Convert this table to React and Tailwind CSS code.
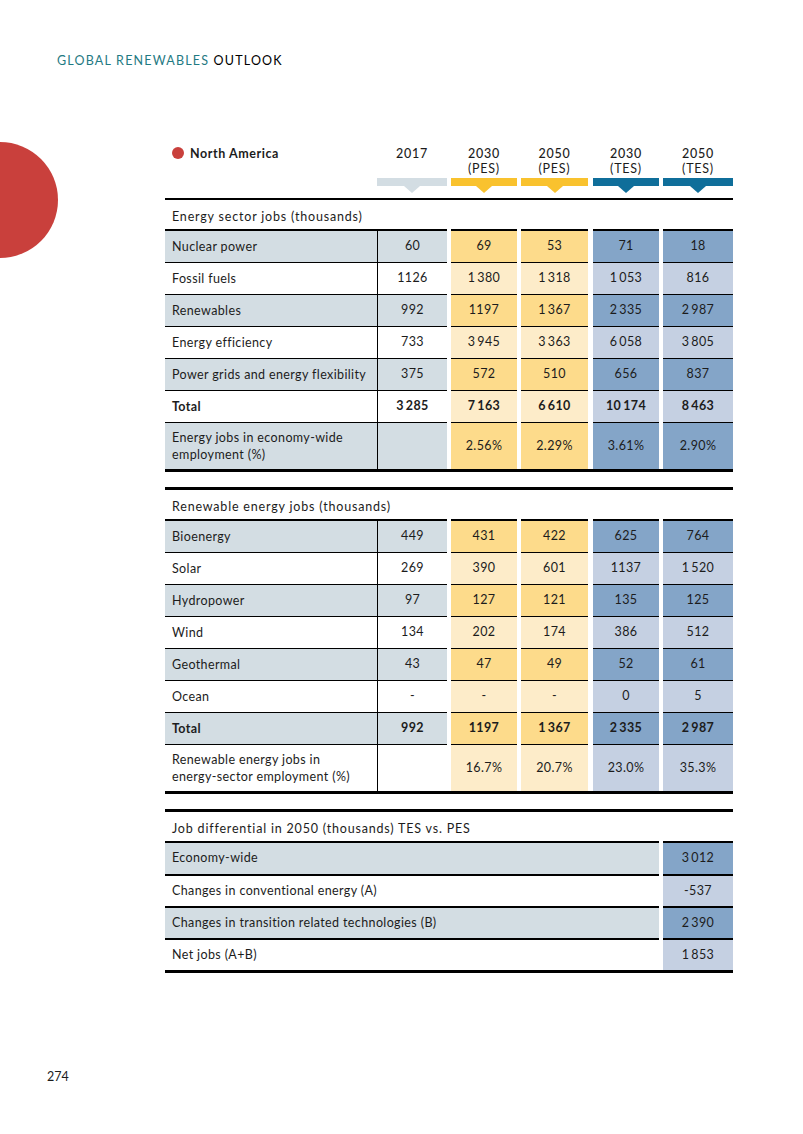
import React from 'react';

const shadeLabel = 'bg-[#d3dde3]';
const t = '\u2009';

const energyRows = [
  ['Nuclear power', '60', '69', '53', '71', '18'],
  ['Fossil fuels', '1126', `1${t}380`, `1${t}318`, `1${t}053`, '816'],
  ['Renewables', '992', '1197', `1${t}367`, `2${t}335`, `2${t}987`],
  ['Energy efficiency', '733', `3${t}945`, `3${t}363`, `6${t}058`, `3${t}805`],
  ['Power grids and energy flexibility', '375', '572', '510', '656', '837'],
];

const renewableRows = [
  ['Bioenergy', '449', '431', '422', '625', '764'],
  ['Solar', '269', '390', '601', '1137', `1${t}520`],
  ['Hydropower', '97', '127', '121', '135', '125'],
  ['Wind', '134', '202', '174', '386', '512'],
  ['Geothermal', '43', '47', '49', '52', '61'],
  ['Ocean', '-', '-', '-', '0', '5'],
];

const diffRows = [
  ['Economy-wide', `3${t}012`],
  ['Changes in conventional energy (A)', '-537'],
  ['Changes in transition related technologies (B)', `2${t}390`],
  ['Net jobs (A+B)', `1${t}853`],
];

function Row({ label, vals, shaded, bold, tall, first }) {
  const h = tall ? 'h-[47px]' : first ? 'h-[33px]' : 'h-[32px]';
  const bt = first ? 'border-t-2 border-black' : 'border-t border-black';
  const weight = bold ? 'font-bold' : '';
  const yellow = shaded ? 'bg-[#fddb8b]' : 'bg-[#fdecc9]';
  const blue = shaded ? 'bg-[#84a5c8]' : 'bg-[#c5d0e2]';
  const left = shaded ? shadeLabel : 'bg-white';
  return (
    <div className={`flex ${h} ${weight}`}>
      <div className={`w-[212px] ${bt} ${left} pl-[7px] flex items-center leading-[17px]`}>{label}</div>
      <div className={`w-[70px] ${bt} border-l ${left} flex items-center justify-center`}>{vals[0]}</div>
      <div className="w-[4px] bg-white" />
      <div className={`w-[66px] ${bt} ${yellow} flex items-center justify-center`}>{vals[1]}</div>
      <div className="w-[4px] bg-white" />
      <div className={`w-[67px] ${bt} ${yellow} flex items-center justify-center`}>{vals[2]}</div>
      <div className="w-[5px] bg-white" />
      <div className={`w-[66px] ${bt} ${blue} flex items-center justify-center`}>{vals[3]}</div>
      <div className="w-[4px] bg-white" />
      <div className={`w-[70px] ${bt} ${blue} flex items-center justify-center`}>{vals[4]}</div>
    </div>
  );
}

function DiffRow({ label, val, shaded, first }) {
  const h = first ? 'h-[33px]' : 'h-[32px]';
  return (
    <div className={`flex ${h}`}>
      <div className={`w-[494px] border-t-2 border-black ${shaded ? shadeLabel : 'bg-white'} pl-[7px] flex items-center`}>{label}</div>
      <div className="w-[4px] bg-white" />
      <div className={`w-[70px] border-t-2 border-black ${shaded ? 'bg-[#84a5c8]' : 'bg-[#c5d0e2]'} flex items-center justify-center`}>{val}</div>
    </div>
  );
}

function SectionTitle({ children }) {
  return <div className="h-[29px] flex items-center pl-[7px] pt-[5px] tracking-[0.065em]">{children}</div>;
}

function HeadCol({ top, bottom, width, bar, tri }) {
  return (
    <div className={`${width} flex flex-col items-center`}>
      <div className="h-[33px] flex flex-col items-center leading-[15px] pt-[1px] tracking-[0.06em]">
        <span className="font-medium">{top}</span>
        {bottom && <span>{bottom}</span>}
      </div>
      <div className={`w-full h-[8px] ${bar}`} />
      <div className={`w-0 h-0 border-l-[8px] border-r-[8px] border-t-[7px] border-l-transparent border-r-transparent ${tri}`} />
    </div>
  );
}

export default function App() {
  return (
    <div
      className="relative w-[803px] h-[1134px] bg-white overflow-hidden text-[#1c1c1c]"
      style={{ fontFamily: 'Lato, "Open Sans", sans-serif' }}
    >
      <div className="absolute left-[-58px] top-[142px] w-[116px] h-[116px] rounded-full bg-[#c9403c]" />

      <div className="pt-[53px] pl-[57px] text-[12.5px] leading-[16px] tracking-[0.095em]">
        <span className="text-[#1f7a83]">GLOBAL RENEWABLES</span> <span className="text-black">OUTLOOK</span>
      </div>

      <div className="mt-[76px] pl-[165px] text-[12.5px] tracking-[0.03em]">
        <div className="flex h-[53px]">
          <div className="w-[212px] flex items-start pl-[7px] pt-[1px] leading-[15px]">
            <span className="w-[12px] h-[12px] rounded-full bg-[#c9403c] mr-[6px] mt-[1px]" />
            <span className="font-bold tracking-[0.045em]">North America</span>
          </div>
          <HeadCol top="2017" width="w-[70px]" bar="bg-[#d3dde3]" tri="border-t-[#d3dde3]" />
          <div className="w-[4px]" />
          <HeadCol top="2030" bottom="(PES)" width="w-[66px]" bar="bg-[#f9c22e]" tri="border-t-[#f9c22e]" />
          <div className="w-[4px]" />
          <HeadCol top="2050" bottom="(PES)" width="w-[67px]" bar="bg-[#f9c22e]" tri="border-t-[#f9c22e]" />
          <div className="w-[5px]" />
          <HeadCol top="2030" bottom="(TES)" width="w-[66px]" bar="bg-[#0f6e9a]" tri="border-t-[#0f6e9a]" />
          <div className="w-[4px]" />
          <HeadCol top="2050" bottom="(TES)" width="w-[70px]" bar="bg-[#0f6e9a]" tri="border-t-[#0f6e9a]" />
        </div>

        <div className="w-[568px] h-[2px] bg-black" />
        <SectionTitle>Energy sector jobs (thousands)</SectionTitle>
        {energyRows.map((r, i) => (
          <Row key={r[0]} label={r[0]} vals={r.slice(1)} shaded={i % 2 === 0} first={i === 0} />
        ))}
        <Row label="Total" vals={[`3${t}285`, `7${t}163`, `6${t}610`, `10${t}174`, `8${t}463`]} bold />
        <Row label={<span>Energy jobs in economy-wide<br />employment (%)</span>} vals={['', '2.56%', '2.29%', '3.61%', '2.90%']} shaded tall />
        <div className="w-[568px] h-[3px] bg-black" />

        <div className="mt-[15px] w-[568px] h-[3px] bg-black" />
        <SectionTitle>Renewable energy jobs (thousands)</SectionTitle>
        {renewableRows.map((r, i) => (
          <Row key={r[0]} label={r[0]} vals={r.slice(1)} shaded={i % 2 === 0} first={i === 0} />
        ))}
        <Row label="Total" vals={['992', '1197', `1${t}367`, `2${t}335`, `2${t}987`]} shaded bold />
        <Row label={<span>Renewable energy jobs in<br />energy-sector employment (%)</span>} vals={['', '16.7%', '20.7%', '23.0%', '35.3%']} tall />
        <div className="w-[568px] h-[3px] bg-black" />

        <div className="mt-[15px] w-[568px] h-[3px] bg-black" />
        <SectionTitle>Job differential in 2050 (thousands) TES vs. PES</SectionTitle>
        {diffRows.map((r, i) => (
          <DiffRow key={r[0]} label={r[0]} val={r[1]} shaded={i % 2 === 0} first={i === 0} />
        ))}
        <div className="w-[568px] h-[3px] bg-black" />
      </div>

      <div className="mt-[96px] pl-[47px] text-[12.5px] leading-[16px]">274</div>
    </div>
  );
}
